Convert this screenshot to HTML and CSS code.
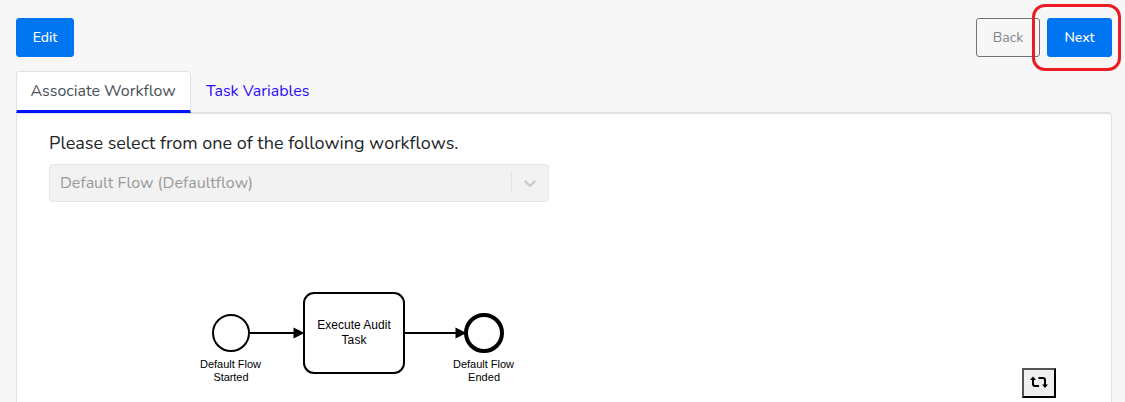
FILE: index.html
```html
<!DOCTYPE html>
<html lang="en">
<head>
<meta charset="utf-8">
<title>Associate Workflow</title>
<link rel="stylesheet" href="styles.css">
</head>
<body>
<header class="toolbar">
  <button class="btn primary edit">Edit</button>
  <div class="actions">
    <button class="btn outline">Back</button>
    <div class="next-wrap"><button class="btn primary next">Next</button><span class="highlight"></span></div>
  </div>
</header>
<nav class="tabs">
  <a class="tab active">Associate Workflow</a>
  <a class="tab">Task Variables</a>
</nav>
<main class="panel">
  <p class="prompt">Please select from one of the following workflows.</p>
  <div class="select">
    <span class="value">Default Flow (Defaultflow)</span>
    <span class="separator"></span>
    <svg class="chevron" width="20" height="20" viewBox="0 0 20 20"><path d="M4.516 7.548c0.436-0.446 1.043-0.481 1.576 0l3.908 3.747 3.908-3.747c0.533-0.481 1.141-0.446 1.574 0 0.436 0.445 0.408 1.197 0 1.615-0.406 0.418-4.695 4.502-4.695 4.502-0.217 0.223-0.502 0.335-0.787 0.335s-0.57-0.112-0.789-0.335c0 0-4.287-4.084-4.695-4.502s-0.436-1.17 0-1.615z"/></svg>
  </div>
  <div class="canvas">
    <svg class="diagram" width="340" height="110" viewBox="190 285 340 110">
      <circle class="node" cx="231" cy="333" r="18"/>
      <rect class="node" x="304" y="293" width="100" height="80" rx="10"/>
      <circle class="node end" cx="484" cy="333" r="18"/>
      <path class="flow" d="M250 333H300M405 333H461"/>
      <path d="M293.500 327.500L304.500 333L293.500 338.500ZM455.500 327.500L466.500 333L455.500 338.500Z"/>
      <g class="labels">
        <text x="230.500" y="368" textLength="61">Default Flow</text>
        <text x="231" y="381" textLength="35">Started</text>
        <text x="483.500" y="368" textLength="61">Default Flow</text>
        <text x="484" y="381" textLength="32">Ended</text>
      </g>
      <g class="labels task">
        <text x="354" y="329" textLength="73.500">Execute Audit</text>
        <text x="354" y="344" textLength="25">Task</text>
      </g>
    </svg>
    <button class="reset" aria-label="Toggle layout">
      <svg width="18" height="14" viewBox="0 0 18 14"><path class="arrow" d="M3 4V9Q3 11 5 11H9M8.500 3H13Q15 3 15 5V10"/><path d="M0 5L3 1.500L6 5ZM12 9.500L15 13L18 9.500Z"/></svg>
    </button>
  </div>
</main>
</body>
</html>
```
FILE: styles.css
```css
* { box-sizing: border-box; }
body {
  margin: 0;
  height: 402px;
  padding: 18px 13px 0 16px;
  overflow: hidden;
  background: #f7f7f7;
  color: #212529;
  font-family: Nunito, "Open Sans", sans-serif;
  font-weight: 400;
}
button { font: inherit; padding: 0; }
.toolbar { display: flex; justify-content: space-between; height: 53px; }
.actions { display: flex; gap: 7px; }
.btn { height: 39px; border: 1px solid #0075f2; border-radius: 3px; font-size: 14px; line-height: 35px; padding-bottom: 1px; }
.primary { background: #0075f2; color: #fff; font-weight: 500; }
.edit { width: 58px; }
.outline { width: 64px; border-color: #6c757d; background: transparent; color: #7b838a; }
.next-wrap { position: relative; height: 39px; }
.next { width: 65px; }
.highlight { position: absolute; left: -15px; top: -14px; width: 89px; height: 67px; border: 3px solid #ed1c24; border-radius: 13px; }
.tabs { display: flex; height: 42px; position: relative; }
.tab { height: 41px; padding: 0 15px; line-height: 40px; font-size: 16px; color: #2a0df5; white-space: nowrap; }
.active { width: 175px; height: 42px; padding: 0 13.5px; color: #495057; background: #fff; border: 1px solid #dee2e6; border-bottom: 3px solid #0014ff; border-radius: 4px 4px 0 0; line-height: 38px; }
.panel { height: 300px; margin-top: -1px; padding: 17px 32px 0; background: #fff; border: 1px solid #dee2e6; border-top-width: 2px; border-radius: 0 4px 0 0; }
.prompt { margin: 0; height: 33px; font-size: 18px; line-height: 24px; white-space: nowrap; }
.select { display: flex; align-items: center; width: 500px; height: 38px; padding: 0 8px 0 10px; background: #f2f2f2; border: 1px solid #e6e6e6; border-radius: 4px; color: #999; font-size: 16px; }
.value { flex: 1; white-space: nowrap; }
.separator { width: 1px; height: 20px; margin-right: 8px; background: #e0e0e0; }
.chevron { fill: #ccc; }
.canvas { display: flex; justify-content: space-between; margin: 83px 23px 0 141px; }
.diagram { display: block; }
.node { fill: #fff; stroke: #000; stroke-width: 2; }
.end { stroke-width: 4; }
.flow { stroke: #000; stroke-width: 2; fill: none; }
.labels { font-family: Arial, "Liberation Sans", sans-serif; font-size: 11px; font-weight: 400; text-anchor: middle; }
.task { font-size: 12px; }
.reset { display: flex; align-items: center; justify-content: center; width: 34px; height: 30px; margin-top: 83px; padding-bottom: 3px; background: #efefef; border: 2px solid; border-color: #555 #000 #000 #555; }
.arrow { fill: none; stroke: #000; stroke-width: 2; }
```
